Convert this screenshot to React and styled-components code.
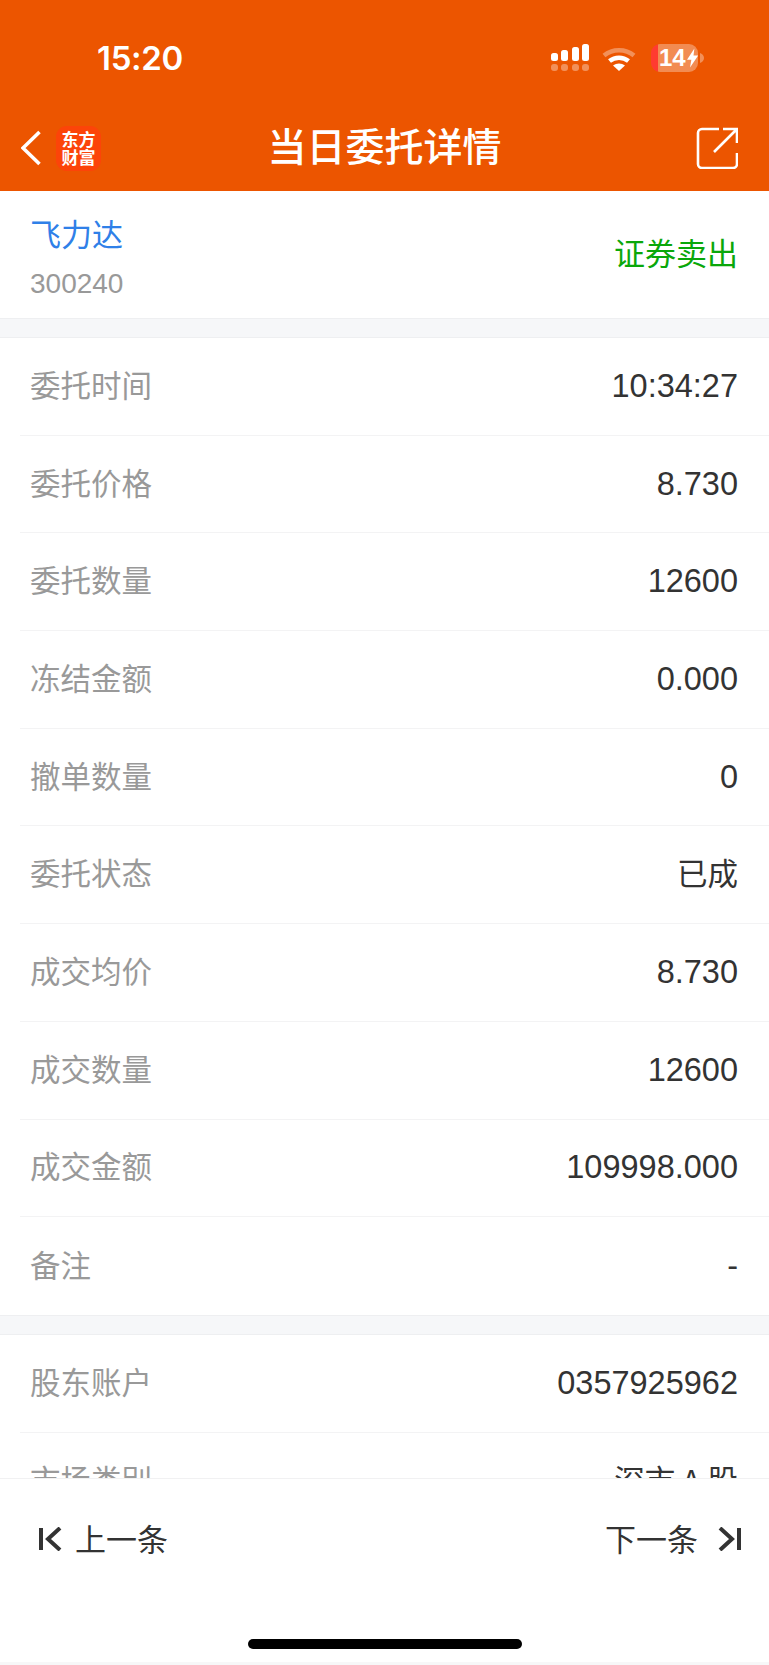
import * as React from "react"
import styled, { createGlobalStyle } from "styled-components"

const CJK = `"Noto Sans CJK SC", "Liberation Sans", sans-serif`;
const NUM = `"Liberation Sans", "Noto Sans CJK SC", sans-serif`;

const Global = createGlobalStyle`
  html, body { margin: 0; padding: 0; background: #fff; }
  * { box-sizing: border-box; }
`;

const Page = styled.div`
  width: 769px;
  height: 1665px;
  display: flex;
  flex-direction: column;
  overflow: hidden;
  font-family: ${CJK};
  background: #fff;
`;

const Header = styled.header`
  height: 191px;
  flex: none;
  background: #ec5500;
  color: #fff;
  display: flex;
  flex-direction: column;
`;

const StatusBar = styled.div`
  height: 115px;
  padding: 44px 65px 0 97px;
  display: flex;
  justify-content: space-between;
  align-items: flex-start;
`;

const Time = styled.div`
  font-family: "Inter", ${NUM};
  font-size: 33px;
  font-weight: 600;
  letter-spacing: -0.3px;
  line-height: 28px;
`;

const StatusIcons = styled.div`
  display: flex;
  align-items: flex-start;
`;

const Battery = styled.div`
  width: 47px;
  height: 28px;
  margin-left: 15px;
  border-radius: 9px;
  background: linear-gradient(90deg, #ff3b30 7px, rgba(255, 255, 255, 0.32) 7px);
  padding-left: 8px;
  display: flex;
  align-items: center;
  font-family: ${NUM};
  font-weight: 700;
  font-size: 24px;
  line-height: 28px;
`;

const NavBar = styled.div`
  flex: 1;
  display: grid;
  grid-template-columns: 1fr auto 1fr;
  align-items: center;
  padding: 0 31px 10px;
`;

const NavLeft = styled.div`
  display: flex;
  align-items: center;
  gap: 15px;
  margin-left: -10px;
`;

const Logo = styled.div`
  width: 45px;
  height: 45px;
  border-radius: 11px;
  background: #fc4409;
  display: flex;
  align-items: center;
  justify-content: center;
  font-size: 17px;
  font-weight: 700;
  line-height: 18px;
  text-align: center;
`;

const Title = styled.h1`
  margin: 0;
  padding-bottom: 8px;
  text-align: center;
  font-size: 39px;
  font-weight: 500;
  line-height: 44px;
`;

const NavRight = styled.div`
  display: flex;
  justify-content: flex-end;
`;

const Content = styled.main`
  flex: 1;
  min-height: 0;
  overflow: hidden;
`;

const StockRow = styled.div`
  height: 127px;
  padding: 22px 31px 0 30px;
  display: flex;
  justify-content: space-between;
  align-items: flex-start;
`;

const StockName = styled.div`
  font-size: 31px;
  line-height: 40px;
  color: #2f80e8;
`;

const StockCode = styled.div`
  font-family: ${NUM};
  font-size: 28px;
  line-height: 32px;
  margin-top: 15px;
  color: #999;
`;

const TradeType = styled.div`
  font-size: 31px;
  line-height: 40px;
  margin-top: 19px;
  color: #0aa70a;
`;

const Band = styled.div`
  height: 20px;
  background: #f6f7f9;
  border-top: 1px solid #eeeff1;
  border-bottom: 1px solid #eeeff1;
`;

const Row = styled.div`
  height: 97.7px;
  margin-left: 20px;
  padding: 0 31px 0 10px;
  display: flex;
  align-items: center;
  justify-content: space-between;
  border-bottom: ${(p) => (p.$last ? "none" : "1px solid #f3f3f4")};
`;

const Label = styled.span`
  font-size: 30.5px;
  padding-bottom: 5px;
  color: #999;
`;

const Value = styled.span`
  font-size: ${(p) => (p.$num ? "32.5px" : "30.5px")};
  font-family: ${(p) => (p.$num ? NUM : CJK)};
  padding-bottom: ${(p) => (p.$num ? "0" : "5px")};
  color: #333;
`;

const Footer = styled.footer`
  height: 187px;
  flex: none;
  background: #fff;
  border-top: 1px solid #f1f1f2;
  border-bottom: 3px solid #f7f7f8;
  display: flex;
  flex-direction: column;
`;

const Pager = styled.div`
  height: 120px;
  padding: 0 27px 0 38px;
  display: flex;
  justify-content: space-between;
  align-items: center;
`;

const PagerButton = styled.div`
  display: flex;
  align-items: center;
  gap: ${(p) => p.$gap}px;
  font-size: 31px;
  color: #333;
`;

const PagerText = styled.span`
  padding-bottom: 4px;
`;

const HomeBar = styled.div`
  width: 274px;
  height: 10px;
  margin: 40px auto 0;
  border-radius: 5px;
  background: #000;
`;

const WifiSvg = styled.svg`
  margin: 2px 0 0 13px;
`;

const BoltSvg = styled.svg`
  margin-left: 1px;
`;

const NubSvg = styled.svg`
  margin: 9px 0 0 2px;
  opacity: 0.35;
`;

const BackIcon = () => (
  <svg width="20" height="36" viewBox="0 0 20 36" fill="none">
    <path d="M18.5 2L2 18l16.5 16" stroke="#fff" strokeWidth="3.6" />
  </svg>
);

const ShareIcon = () => (
  <svg width="42" height="42" viewBox="0 0 42 42" fill="none" stroke="#fff" strokeWidth="2.6">
    <path d="M23 2H6a4 4 0 0 0-4 4v31a4 4 0 0 0 4 4h31a4 4 0 0 0 4-4V26" />
    <path d="M18 25L40.500 2.500M27 2h14v14" />
  </svg>
);

const SignalIcon = () => (
  <svg width="38" height="27" viewBox="0 0 38 27" fill="#fff">
    <rect x="0" y="9" width="7" height="8" rx="2.5" />
    <rect x="10" y="6" width="7" height="11" rx="2.5" />
    <rect x="21" y="3" width="7" height="14" rx="2.5" />
    <rect x="31" y="0" width="7" height="17" rx="2.5" />
    <g opacity="0.35">
      <rect x="0" y="20" width="7" height="7" rx="3" />
      <rect x="10" y="20" width="7" height="7" rx="3" />
      <rect x="21" y="20" width="7" height="7" rx="3" />
      <rect x="31" y="20" width="7" height="7" rx="3" />
    </g>
  </svg>
);

const WifiIcon = () => (
  <WifiSvg width="34" height="26" viewBox="0 0 34 26" fill="none">
    <path d="M2 9.500C10.500 2.500 23.500 2.500 32 9.500" stroke="#fff" strokeOpacity="0.35" strokeWidth="4.500" />
    <path d="M7.500 15C13 10.500 21 10.500 26.500 15" stroke="#fff" strokeWidth="4.500" />
    <path d="M17 25l-6-5.500c3.500-2.800 8.500-2.800 12 0z" fill="#fff" />
  </WifiSvg>
);

const BoltIcon = () => (
  <BoltSvg width="13" height="22" viewBox="0 0 13 22" fill="#fff">
    <path d="M8.500 0L0 13h5l-1.500 9L13 8H7.500z" />
  </BoltSvg>
);

const BatteryNub = () => (
  <NubSvg width="4" height="10" viewBox="0 0 4 10" fill="#fff">
    <path d="M0 0c2 .5 4 2.500 4 5s-2 4.500-4 5z" />
  </NubSvg>
);

const FirstIcon = () => (
  <svg width="24" height="24" viewBox="0 0 24 24" fill="none" stroke="#333" strokeWidth="4">
    <path d="M3 1v22M22 1L10 12l12 11" />
  </svg>
);

const LastIcon = () => (
  <svg width="24" height="24" viewBox="0 0 24 24" fill="none" stroke="#333" strokeWidth="4">
    <path d="M21 1v22M2 1l12 11L2 23" />
  </svg>
);

const orderRows = [
  ["委托时间", "10:34:27", true],
  ["委托价格", "8.730", true],
  ["委托数量", "12600", true],
  ["冻结金额", "0.000", true],
  ["撤单数量", "0", true],
  ["委托状态", "已成", false],
  ["成交均价", "8.730", true],
  ["成交数量", "12600", true],
  ["成交金额", "109998.000", true],
  ["备注", "-", true],
];

const accountRows = [
  ["股东账户", "0357925962", true],
  ["市场类别", "深市 A 股", false],
];

const renderRows = (rows) =>
  rows.map(([label, value, num], i) => (
    <Row key={label} $last={i === rows.length - 1}>
      <Label>{label}</Label>
      <Value $num={num}>{value}</Value>
    </Row>
  ));

export default function App() {
  return (
    <Page>
      <Global />
      <Header>
        <StatusBar>
          <Time>15:20</Time>
          <StatusIcons>
            <SignalIcon />
            <WifiIcon />
            <Battery>
              14
              <BoltIcon />
            </Battery>
            <BatteryNub />
          </StatusIcons>
        </StatusBar>
        <NavBar>
          <NavLeft>
            <BackIcon />
            <Logo>
              东方
              <br />
              财富
            </Logo>
          </NavLeft>
          <Title>当日委托详情</Title>
          <NavRight>
            <ShareIcon />
          </NavRight>
        </NavBar>
      </Header>
      <Content>
        <StockRow>
          <div>
            <StockName>飞力达</StockName>
            <StockCode>300240</StockCode>
          </div>
          <TradeType>证券卖出</TradeType>
        </StockRow>
        <Band />
        {renderRows(orderRows)}
        <Band />
        {renderRows(accountRows)}
      </Content>
      <Footer>
        <Pager>
          <PagerButton $gap={13}>
            <FirstIcon />
            <PagerText>上一条</PagerText>
          </PagerButton>
          <PagerButton $gap={20}>
            <PagerText>下一条</PagerText>
            <LastIcon />
          </PagerButton>
        </Pager>
        <HomeBar />
      </Footer>
    </Page>
  );
}
